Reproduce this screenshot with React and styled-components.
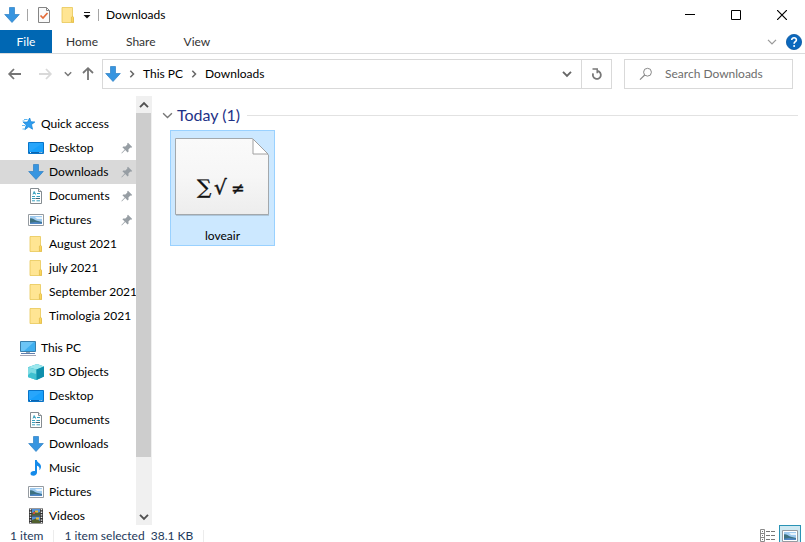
import React, { useState } from 'react'
import styled, { createGlobalStyle } from 'styled-components'

const GlobalStyle = createGlobalStyle`
  * {
    box-sizing: border-box;
  }
  body {
    margin: 0;
    background: #fff;
    color: #000;
    font: 12px/16px Lato, "Open Sans", sans-serif;
  }
  button, input {
    margin: 0;
    padding: 0;
    border: 0;
    background: none;
    color: inherit;
    font: inherit;
  }
  svg {
    display: block;
    flex: none;
  }
`;

const Window = styled.div`
  display: flex;
  flex-direction: column;
  height: 100vh;
  overflow: hidden;
`;

const TitleBar = styled.header`
  display: flex;
  align-items: center;
  flex: none;
  height: 30px;
  padding-left: 4px;
`;

const QuickTools = styled.div`
  display: flex;
  align-items: center;
  gap: 7px;
`;

const Divider = styled.span`
  width: 1px;
  height: 12px;
  background: ${props => props.$color || '#a5a5a5'};
`;

const ToolButton = styled.button`
  display: flex;
  align-items: center;
  justify-content: center;
  width: ${props => props.$width || 16}px;
  height: 16px;
`;

const Title = styled.h1`
  margin: 0;
  font-size: 12px;
  font-weight: 400;
`;

const WindowControls = styled.div`
  display: flex;
  margin-left: auto;
`;

const WindowButton = styled.button`
  display: flex;
  align-items: center;
  justify-content: center;
  width: 46px;
  height: 30px;
  &:hover {
    background: #e5e5e5;
  }
`;

const Ribbon = styled.div`
  display: flex;
  align-items: stretch;
  flex: none;
  height: 24px;
  border-bottom: 1px solid #dadbdc;
`;

const Tab = styled.button`
  min-width: 52px;
  padding: 0 14px;
  color: ${props => props.$primary ? '#fff' : '#333'};
  background: ${props => props.$primary ? '#0067b3' : 'transparent'};
`;

const RibbonRight = styled.div`
  display: flex;
  align-items: center;
  gap: 6px;
  margin-left: auto;
  padding-right: 3px;
`;

const AddressRow = styled.div`
  display: flex;
  align-items: center;
  flex: none;
  height: 42px;
  padding: 0 12px 2px 4px;
`;

const Arrows = styled.div`
  display: flex;
  align-items: center;
  width: 98px;
  gap: 8px;
`;

const AddressBox = styled.div`
  display: flex;
  align-items: center;
  flex: 1;
  height: 30px;
  padding-left: 2px;
  border: 1px solid #d9d9d9;
`;

const Crumbs = styled.div`
  display: flex;
  align-items: center;
  flex: 1;
  gap: 7px;
`;

const BoxButton = styled.button`
  display: flex;
  align-items: center;
  justify-content: center;
  width: 30px;
  height: 28px;
  border-left: 1px solid ${props => props.$line ? '#d9d9d9' : 'transparent'};
`;

const SearchBox = styled.label`
  display: flex;
  align-items: center;
  gap: 12px;
  width: 169px;
  height: 30px;
  margin-left: 12px;
  padding-left: 14px;
  border: 1px solid #d9d9d9;
`;

const SearchInput = styled.input`
  flex: 1;
  min-width: 0;
  outline: none;
  &::placeholder {
    color: #6d6d6d;
    opacity: 1;
  }
`;

const Main = styled.div`
  display: flex;
  flex: 1;
  min-height: 0;
`;

const NavPane = styled.nav`
  width: 136px;
  padding-top: 16px;
  overflow: hidden;
`;

const NavGroup = styled.ul`
  margin: 0 0 8px;
  padding: 0;
  list-style: none;
`;

const NavItem = styled.button`
  display: flex;
  align-items: center;
  gap: 5px;
  width: 100%;
  height: 24px;
  padding: 0 3px 0 ${props => props.$root ? 20 : 28}px;
  text-align: left;
  white-space: nowrap;
  background: ${props => props.$selected ? '#d9d9d9' : 'transparent'};
`;

const NavLabel = styled.span`
  flex: 1;
`;

const ScrollBar = styled.div`
  display: flex;
  flex-direction: column;
  width: 16px;
  background: #f0f0f0;
`;

const ScrollButton = styled.button`
  display: flex;
  align-items: center;
  justify-content: center;
  height: 17px;
`;

const ScrollTrack = styled.div`
  flex: 1;
`;

const ScrollThumb = styled.div`
  width: 15px;
  height: 87%;
  background: #cdcdcd;
`;

const Content = styled.main`
  flex: 1;
  padding: 8px 7px 0 10px;
`;

const GroupHeader = styled.div`
  display: flex;
  align-items: center;
  gap: 4px;
  height: 22px;
`;

const GroupTitle = styled.h2`
  margin: 0;
  color: #1e3287;
  font-size: 16px;
  font-weight: 400;
  line-height: 20px;
`;

const GroupLine = styled.div`
  flex: 1;
  height: 1px;
  margin-left: 3px;
  background: #e2e2e2;
`;

const FileTile = styled.button`
  display: flex;
  flex-direction: column;
  align-items: center;
  justify-content: space-between;
  width: 105px;
  height: 116px;
  margin: 4px 0 0 8px;
  padding: 6px 0 1px;
  border: 1px solid #99d1ff;
  background: #cce8ff;
`;

const StatusBar = styled.footer`
  display: flex;
  align-items: flex-start;
  flex: none;
  height: 17px;
  padding: 0 4px 0 10px;
  overflow: hidden;
  color: #1e395b;
`;

const StatusText = styled.div`
  display: flex;
  align-items: center;
  gap: 10px;
  padding-top: 4px;
  line-height: 13px;
  white-space: pre;
`;

const ViewButtons = styled.div`
  display: flex;
  margin-left: auto;
`;

const ViewButton = styled.button`
  display: flex;
  align-items: center;
  justify-content: center;
  width: 22px;
  height: 22px;
  border: 1px solid ${props => props.$active ? '#2a93b5' : 'transparent'};
  background: ${props => props.$active ? '#cfe9f2' : 'transparent'};
`;


const DownloadIcon = () => (
  <svg width="16" height="16" viewBox="0 0 16 16">
    <path d="M5.5 .5h5v7h4.8L8 15.5.7 7.5h4.8z" fill="#3795e0" stroke="#2d7fc4" strokeWidth=".7" />
  </svg>
)

const FolderIcon = () => (
  <svg width="16" height="16" viewBox="0 0 16 16">
    <path d="M2 .5h10.5V10l1 .7v4.8H2z" fill="#ffe593" stroke="#e8c655" strokeWidth=".8" />
    <path d="M11.4 15V10.2l1.2-1.1.9 1.4V15.4z" fill="#fbd75c" stroke="#dfb94c" strokeWidth=".7" />
  </svg>
)

const PropertiesIcon = () => (
  <svg width="16" height="16" viewBox="0 0 16 16">
    <path d="M2.5.5h8l3 3v12h-11z" fill="#fafafa" stroke="#858585" />
    <path d="M10.5.5v3h3" fill="none" stroke="#858585" />
    <path d="M4.5 8.5l2.5 2.5 4.5-5" fill="none" stroke="#e46b38" strokeWidth="1.7" />
  </svg>
)

const StarIcon = () => (
  <svg width="16" height="16" viewBox="0 0 16 16">
    <path d="M9.7 2l1.1 3.8 4 .2-3.300 2.500 1 4.700-3.700-2.400-3.900 2.800 1.400-4.600-3.100-2.800 4.300-.1z" fill="#2e9df0" stroke="#1786d8" strokeWidth=".8" />
    <path d="M4 3.5h3.500M2.5 5h2M2 9.5h3M2.500 13h2.500" stroke="#62b9f2" />
  </svg>
)

const DesktopIcon = () => (
  <svg width="16" height="16" viewBox="0 0 16 16">
    <path d="M.5 2.5h15v11H.5z" fill="#18a0fb" stroke="#0874c8" />
    <path d="M1 3h14L3 11H1z" fill="#28a6fb" />
    <path d="M1 12.5h14" stroke="#0b63ae" />
    <path d="M2 12.5h1M11.5 12.5h1M13.3 12.5h1" stroke="#d5efff" />
  </svg>
)

const DocumentIcon = () => (
  <svg width="16" height="16" viewBox="0 0 16 16">
    <path d="M2.5.5h8l3 3v12h-11z" fill="#fff" stroke="#858c91" />
    <path d="M10.5.5v3h3" fill="#eee" stroke="#858c91" />
    <path d="M5 6.5l1.2-3 1.3 3M5.5 5.4h2M9 5.5h3M4 8.5h3M8.5 8.5H12M4 10.5h3M8.5 10.5H12M4 12.8h3M8.5 12.8H12" fill="none" stroke="#38a0be" />
    <path d="M7.5 10.5H12" stroke="#46606f" />
  </svg>
)

const PictureIcon = () => (
  <svg width="16" height="16" viewBox="0 0 16 16">
    <path d="M.5 2.5h15v11H.5z" fill="#fff" stroke="#959ba1" />
    <path d="M2 4h12v8H2z" fill="#9fcbf0" />
    <path d="M7 5h7v2H9z" fill="#e6f3fc" />
    <path d="M2 6.5c2-.8 4 1.3 6 2l6 1.5v2H2z" fill="#3d7180" />
    <path d="M2 10.7l5-.8 7 .9V12H2z" fill="#4f86c4" />
  </svg>
)

const ComputerIcon = () => (
  <svg width="16" height="16" viewBox="0 0 16 16">
    <path d="M.5 1.5h15v10H.5z" fill="#3fafef" stroke="#397fac" />
    <path d="M1 2h13L4 11H1z" fill="#6cc5f6" />
    <path d="M6 12h4v1H6z" fill="#9baab4" />
    <path d="M1 13.5h14" stroke="#5f7fae" />
    <path d="M0 15.5h16" stroke="#a4a6b6" />
  </svg>
)

const CubeIcon = () => (
  <svg width="16" height="16" viewBox="0 0 16 16">
    <path d="M0 3.3L9 0l7 2.5v10L8.5 16 0 13z" fill="#21a9c1" />
    <path d="M0 3.3L9 0l7 2.5-7.5 3z" fill="#9ce8ee" />
    <path d="M0 3.3l8.5 2.2V16L0 13z" fill="#7fdce4" />
    <path d="M3 8.5l5.5 1.500v6L0 13v-2z" fill="#3fc0d0" />
    <path d="M8.5 5.5L16 2.5v10L8.5 16z" fill="#0f8fac" />
  </svg>
)

const MusicIcon = () => (
  <svg width="16" height="16" viewBox="0 0 16 16">
    <path d="M7 0h1.8c.2 2.7 4.3 3.3 4.2 6.7 0 1.6-.8 2.7-1.6 3.6.5-2.5-.4-4-2.4-4.5v6.8c0 2-1.6 3.2-3.6 3.2-1.8 0-2.9-1-2.9-2.3 0-1.7 2-3 4.5-2.5z" fill="#168bea" />
  </svg>
)

const VideoIcon = () => (
  <svg width="16" height="16" viewBox="0 0 16 16">
    <path d="M1 .5h14v15H1z" fill="#333" />
    <path d="M4 1h8v6.5H4zM4 8.5h8V15H4z" fill="#5290d7" />
    <path d="M4 5l3-2 2 2 3-1v3.5H4zM4 12l4-1.5 4 2.5v2H4z" fill="#50602f" />
    <path d="M7 2.5h3v2H7zM8 9.5h3v2H8z" fill="#eab932" />
    <path d="M5 4h2v2H5z" fill="#c94d4c" />
    <path d="M2.5 1v14M13.5 1v14" stroke="#e8e8e8" strokeWidth="1.5" strokeDasharray="1.3 1.3" />
  </svg>
)

const PinIcon = () => (
  <svg width="12" height="12" viewBox="0 0 12 12">
    <path d="M7 .8L11.2 5l-1 .8-.8-.2-2 2 .2 2-1 .9-2.4-2.4L.8 11.5l-.4-.4 3.3-3.5-2.3-2.3.9-.9 2.1.1 2-2-.3-.8z" fill="#979ea4" />
  </svg>
)

const Chevron = ({ dir = 'down', size = 8, color = '#666', width = 1.5 }) => {
  const turn = { down: 0, up: 180, right: -90 }[dir]
  return (
    <svg width={size} height={size} viewBox="0 0 8 8">
      <path d="M.8 2.3L4 5.5l3.2-3.2" transform={`rotate(${turn} 4 4)`} fill="none" stroke={color} strokeWidth={width} />
    </svg>
  )
}

const Arrow = ({ dir = 'left', color = '#757575' }) => {
  const turn = { left: 0, right: 180, up: 90 }[dir]
  return (
    <svg width="16" height="16" viewBox="0 0 16 16">
      <path d="M7 3L2.2 8 7 13M2.5 8H14" transform={`rotate(${turn} 8 8)`} fill="none" stroke={color} strokeWidth="1.8" />
    </svg>
  )
}

const RefreshIcon = () => (
  <svg width="12" height="14" viewBox="0 0 12 14">
    <path d="M6.500 4A4 4 0 1 1 2.200 6.300" fill="none" stroke="#777" strokeWidth="1.8" />
    <path d="M1.500 2h4.700v4.300" fill="none" stroke="#777" strokeWidth="1.5" />
  </svg>
)

const SearchIcon = () => (
  <svg width="14" height="14" viewBox="0 0 14 14">
    <circle cx="8.5" cy="5.2" r="3.9" fill="none" stroke="#888" />
    <path d="M5.7 8L1 12.7" stroke="#888" strokeWidth="1.2" />
  </svg>
)

const HelpIcon = () => (
  <svg width="16" height="16" viewBox="0 0 16 16">
    <circle cx="8" cy="8" r="7.6" fill="#0b68bd" stroke="#07559f" strokeWidth=".8" />
    <path d="M5.7 6C5.7 3 10.5 3.2 10.4 6c0 1.7-2.3 1.8-2.3 3.7" fill="none" stroke="#fff" strokeWidth="1.6" />
    <circle cx="8.1" cy="12" r="1" fill="#fff" />
  </svg>
)

const ListIcon = () => (
  <svg width="16" height="16" viewBox="0 0 16 16">
    <path d="M.5 1.5h4v12h-4zM.5 5.5h4M.5 9.5h4" fill="#fff" stroke="#8a8a8a" />
    <path d="M2 3.5h1M2 7.5h1M2 11.5h1M6 3.5h4M11 3.5h4M6 7.5h4M11 7.5h4M6 11.5h4M11 11.5h4" stroke="#777" />
  </svg>
)

const FormulaFile = () => (
  <svg width="97" height="80" viewBox="0 0 97 80">
    <defs>
      <linearGradient id="paper" x1="0" y1="0" x2="0" y2="1">
        <stop offset="0" stopColor="#fafafa" />
        <stop offset=".5" stopColor="#f6f6f6" />
        <stop offset="1" stopColor="#ededed" />
      </linearGradient>
    </defs>
    <path d="M2 2.5h76l17 17V79H2z" fill="#8ea4b5" opacity=".5" />
    <path d="M1.5 1.5h77l16 16.5v59.5h-93z" fill="url(#paper)" stroke="#a3a8ac" />
    <path d="M79 2v15h15z" fill="#fff" stroke="#a0a0a0" />
    <g fill="#111" stroke="#111" strokeWidth=".4" fontFamily="DejaVu Serif, serif">
      <text x="23" y="57" fontSize="20">∑</text>
      <text x="40" y="57" fontSize="20">√</text>
      <text x="57" y="57" fontSize="16" fontFamily="DejaVu Sans, sans-serif">≠</text>
    </g>
  </svg>
)

const quickAccess = [
  { id: 'q-desktop', label: 'Desktop', Icon: DesktopIcon, pinned: true },
  { id: 'q-downloads', label: 'Downloads', Icon: DownloadIcon, pinned: true },
  { id: 'q-documents', label: 'Documents', Icon: DocumentIcon, pinned: true },
  { id: 'q-pictures', label: 'Pictures', Icon: PictureIcon, pinned: true },
  { id: 'q-august', label: 'August 2021', Icon: FolderIcon },
  { id: 'q-july', label: 'july 2021', Icon: FolderIcon },
  { id: 'q-september', label: 'September 2021', Icon: FolderIcon },
  { id: 'q-timologia', label: 'Timologia 2021', Icon: FolderIcon },
]

const thisPc = [
  { id: 'p-3d', label: '3D Objects', Icon: CubeIcon },
  { id: 'p-desktop', label: 'Desktop', Icon: DesktopIcon },
  { id: 'p-documents', label: 'Documents', Icon: DocumentIcon },
  { id: 'p-downloads', label: 'Downloads', Icon: DownloadIcon },
  { id: 'p-music', label: 'Music', Icon: MusicIcon },
  { id: 'p-pictures', label: 'Pictures', Icon: PictureIcon },
  { id: 'p-videos', label: 'Videos', Icon: VideoIcon },
]

const NavTree = ({ title, RootIcon, items, selected, onSelect }) => (
  <NavGroup>
    <li>
      <NavItem $root><RootIcon /><NavLabel>{title}</NavLabel></NavItem>
    </li>
    {items.map(({ id, label, Icon, pinned }) => (
      <li key={id}>
        <NavItem $selected={selected === id} onClick={() => onSelect(id)}>
          <Icon />
          <NavLabel>{label}</NavLabel>
          {pinned && <PinIcon />}
        </NavItem>
      </li>
    ))}
  </NavGroup>
)

const App = () => {
  const [selected, setSelected] = useState('q-downloads');
  const [search, setSearch] = useState('');

  return (
    <Window>
      <GlobalStyle />
      <TitleBar>
        <QuickTools>
          <DownloadIcon />
          <Divider />
          <ToolButton $width={18} aria-label="Properties"><PropertiesIcon /></ToolButton>
          <ToolButton aria-label="New folder"><FolderIcon /></ToolButton>
          <ToolButton $width={8} aria-label="Customize toolbar">
            <svg width="8" height="8" viewBox="0 0 8 8">
              <path d="M1 1.5h6" stroke="#111" />
              <path d="M.5 4h7L4 7.500z" fill="#111" />
            </svg>
          </ToolButton>
          <Divider />
          <Title>Downloads</Title>
        </QuickTools>
        <WindowControls>
          <WindowButton aria-label="Minimize">
            <svg width="10" height="10" viewBox="0 0 10 10"><path d="M0 4.5h10" stroke="#000" /></svg>
          </WindowButton>
          <WindowButton aria-label="Maximize">
            <svg width="10" height="10" viewBox="0 0 10 10"><path d="M.5.5h9v9h-9z" fill="none" stroke="#000" /></svg>
          </WindowButton>
          <WindowButton aria-label="Close">
            <svg width="10" height="10" viewBox="0 0 10 10"><path d="M0 0l10 10M10 0L0 10" stroke="#000" strokeWidth="1.2" /></svg>
          </WindowButton>
        </WindowControls>
      </TitleBar>

      <Ribbon>
        <Tab $primary>File</Tab>
        <Tab>Home</Tab>
        <Tab>Share</Tab>
        <Tab>View</Tab>
        <RibbonRight>
          <ToolButton aria-label="Expand the ribbon"><Chevron size={10} color="#999" width={1} /></ToolButton>
          <ToolButton aria-label="Help"><HelpIcon /></ToolButton>
        </RibbonRight>
      </Ribbon>

      <AddressRow>
        <Arrows>
          <ToolButton $width={22} aria-label="Back"><Arrow /></ToolButton>
          <ToolButton $width={22} aria-label="Forward"><Arrow dir="right" color="#d9d9d9" /></ToolButton>
          <ToolButton $width={8} aria-label="Recent locations"><Chevron color="#777" /></ToolButton>
          <ToolButton aria-label="Up"><Arrow dir="up" /></ToolButton>
        </Arrows>
        <AddressBox>
          <Crumbs>
            <DownloadIcon />
            <Chevron dir="right" />
            <button>This PC</button>
            <Chevron dir="right" />
            <button>Downloads</button>
          </Crumbs>
          <BoxButton aria-label="Previous locations"><Chevron size={10} /></BoxButton>
          <BoxButton $line aria-label="Refresh"><RefreshIcon /></BoxButton>
        </AddressBox>
        <SearchBox>
          <SearchIcon />
          <SearchInput
            aria-label="Search Downloads"
            placeholder="Search Downloads"
            value={search}
            onChange={e => setSearch(e.target.value)}
          />
        </SearchBox>
      </AddressRow>

      <Main>
        <NavPane>
          <NavTree title="Quick access" RootIcon={StarIcon} items={quickAccess} selected={selected} onSelect={setSelected} />
          <NavTree title="This PC" RootIcon={ComputerIcon} items={thisPc} selected={selected} onSelect={setSelected} />
        </NavPane>
        <ScrollBar>
          <ScrollButton aria-label="Scroll up"><Chevron dir="up" size={10} color="#505050" /></ScrollButton>
          <ScrollTrack><ScrollThumb /></ScrollTrack>
          <ScrollButton aria-label="Scroll down"><Chevron size={10} color="#505050" /></ScrollButton>
        </ScrollBar>
        <Content>
          <GroupHeader>
            <Chevron size={11} color="#777" width={1} />
            <GroupTitle>Today (1)</GroupTitle>
            <GroupLine />
          </GroupHeader>
          <FileTile>
            <FormulaFile />
            <span>loveair</span>
          </FileTile>
        </Content>
      </Main>

      <StatusBar>
        <StatusText>
          <span>1 item</span>
          <Divider $color="#ececec" />
          <span>1 item selected  38.1 KB</span>
          <Divider $color="#ececec" />
        </StatusText>
        <ViewButtons>
          <ViewButton aria-label="Details view"><ListIcon /></ViewButton>
          <ViewButton $active aria-label="Large icons view"><PictureIcon /></ViewButton>
        </ViewButtons>
      </StatusBar>
    </Window>
  )
}

export default App
